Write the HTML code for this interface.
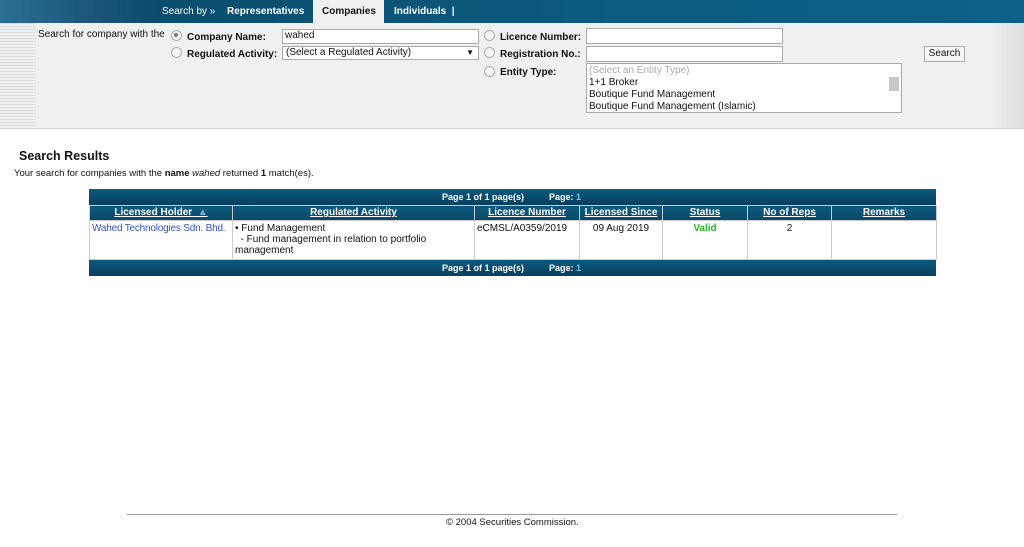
<!DOCTYPE html>
<html><head><style>
body{margin:0;width:1024px;height:547px;background:#fff;font-family:"Liberation Sans",sans-serif;font-size:10px;color:#111;position:relative;overflow:hidden}
.a{position:absolute;white-space:nowrap}
b{font-weight:bold}
.hdr{left:0;top:0;width:1024px;height:23px;background:linear-gradient(90deg,#0a4866 0,#0c5b80 60%,#0d6088)}
.img{left:0;top:0;width:160px;height:23px;background:linear-gradient(90deg,#2a6f94,#1b5578 60%,#0b4a6a);}
.tab{color:#fff;font-weight:bold;top:6px}
.form{left:0;top:23px;width:1024px;height:105px;background:#f0f0f0;border-bottom:1px solid #d4d4d4}
.strip{left:0;top:23px;width:36px;height:105px;background:repeating-linear-gradient(180deg,#dcdcdc 0 1px,#f0f0f0 1px 3px)}
.rstrip{left:990px;top:23px;width:34px;height:105px;background:linear-gradient(90deg,#f0f0f0,#dcdcdc)}
.rad{width:9px;height:9px;border-radius:50%;border:1px solid #aaa;background:#f6f6f6}
.inp{background:#fff;border:1px solid #a9a9a9;height:14px;box-sizing:border-box}
.bar{background:linear-gradient(#0a5a80,#083f5c);color:#fff;font-weight:bold;font-size:9px}
table{table-layout:fixed}
td,th{border:1px solid #ccc;padding:2px 2px;vertical-align:top;overflow:hidden}
td{white-space:normal}
th{background:linear-gradient(#0d5a80,#094866);color:#fff;text-decoration:underline;font-weight:bold;height:12px;font-size:10px;padding:1px 2px}
</style></head><body>
<div class="a hdr"></div><div class="a img"></div>
<div class="a" style="left:313px;top:0;width:71px;height:24px;background:#f0f0f0"></div>
<div class="a" style="left:162px;top:6px;color:#fff">Search by »</div>
<div class="a tab" style="left:227px">Representatives</div>
<div class="a" style="left:322px;top:6px;font-weight:bold;color:#111">Companies</div>
<div class="a tab" style="left:394px">Individuals &nbsp;|</div>
<div class="a form"></div><div class="a strip"></div><div class="a rstrip"></div>
<div class="a" style="left:38px;top:29px">Search for company with the</div>
<div class="a rad" style="left:171px;top:30px"></div><div class="a" style="left:174px;top:33px;width:4px;height:4px;border-radius:50%;background:#777"></div>
<div class="a" style="left:187px;top:32px"><b>Company Name:</b></div>
<div class="a inp" style="left:282px;top:29px;width:197px;height:15px;padding-left:2px">wahed</div>
<div class="a rad" style="left:171px;top:47px"></div>
<div class="a" style="left:187px;top:49px"><b>Regulated Activity:</b></div>
<div class="a inp" style="left:282px;top:46px;width:197px;height:14px;padding-left:3px;line-height:12px">(Select a Regulated Activity)<span style="position:absolute;right:4px;font-size:8px">▼</span></div>
<div class="a rad" style="left:484px;top:30px"></div><div class="a" style="left:500px;top:32px"><b>Licence Number:</b></div>
<div class="a inp" style="left:586px;top:28px;width:197px;height:16px"></div>
<div class="a rad" style="left:484px;top:47px"></div><div class="a" style="left:500px;top:49px"><b>Registration No.:</b></div>
<div class="a inp" style="left:586px;top:46px;width:197px;height:16px"></div>
<div class="a rad" style="left:484px;top:66px"></div><div class="a" style="left:500px;top:67px"><b>Entity Type:</b></div>
<div class="a inp" style="left:586px;top:63px;width:316px;height:50px;line-height:12px;padding:1px 2px"><span style="color:#aaa">(Select an Entity Type)</span><br>1+1 Broker<br>Boutique Fund Management<br>Boutique Fund Management (Islamic)
<div style="position:absolute;right:2px;top:13px;width:10px;height:14px;background:#c8c8c8"></div></div>
<div class="a" style="left:924px;top:46px;width:41px;height:16px;border:1px solid #aaa;background:#f6f6f6;box-sizing:border-box;text-align:center;line-height:14px">Search</div>
<div class="a" style="left:19px;top:149px;font-size:12.5px;font-weight:bold">Search Results</div>
<div class="a" style="left:14px;top:168px;font-size:9.5px">Your search for companies with the <b>name</b> <i>wahed</i> returned <b>1</b> match(es).</div>
<div class="a bar" style="left:89px;top:189px;width:847px;height:16px"><span style="position:absolute;left:353px;top:3px">Page 1 of 1 page(s)</span><span style="position:absolute;left:460px;top:3px">Page: <span style="color:#7cc4ea">1</span></span></div>
<table class="a" style="left:89px;top:205px;width:847px;border-collapse:collapse;border:1px solid #0a4866">
<colgroup><col style="width:143px"><col style="width:242px"><col style="width:105px"><col style="width:83px"><col style="width:85px"><col style="width:84px"><col style="width:105px"></colgroup>
<tr><th>Licensed Holder <span style="color:#6ab0d8;text-decoration:none">&nbsp;▲</span></th><th>Regulated Activity</th><th>Licence Number</th><th>Licensed Since</th><th>Status</th><th>No of Reps</th><th>Remarks</th></tr>
<tr style="height:39px"><td style="color:#3355bb;white-space:nowrap;letter-spacing:-0.2px">Wahed Technologies Sdn. Bhd.</td><td style="line-height:11px">• Fund Management<br>&nbsp;&nbsp;- Fund management in relation to portfolio management</td><td>eCMSL/A0359/2019</td><td style="text-align:center">09 Aug 2019</td><td style="text-align:center;color:#2bb52b;font-weight:bold">Valid</td><td style="text-align:center">2</td><td></td></tr>
</table>
<div class="a bar" style="left:89px;top:260px;width:847px;height:16px"><span style="position:absolute;left:353px;top:3px">Page 1 of 1 page(s)</span><span style="position:absolute;left:460px;top:3px">Page: <span style="color:#7cc4ea">1</span></span></div>
<div class="a" style="left:127px;top:514px;width:770px;height:1px;background:#999"></div>
<div class="a" style="left:446px;top:517px;font-size:9.5px">© 2004 Securities Commission.</div>
</body></html>
